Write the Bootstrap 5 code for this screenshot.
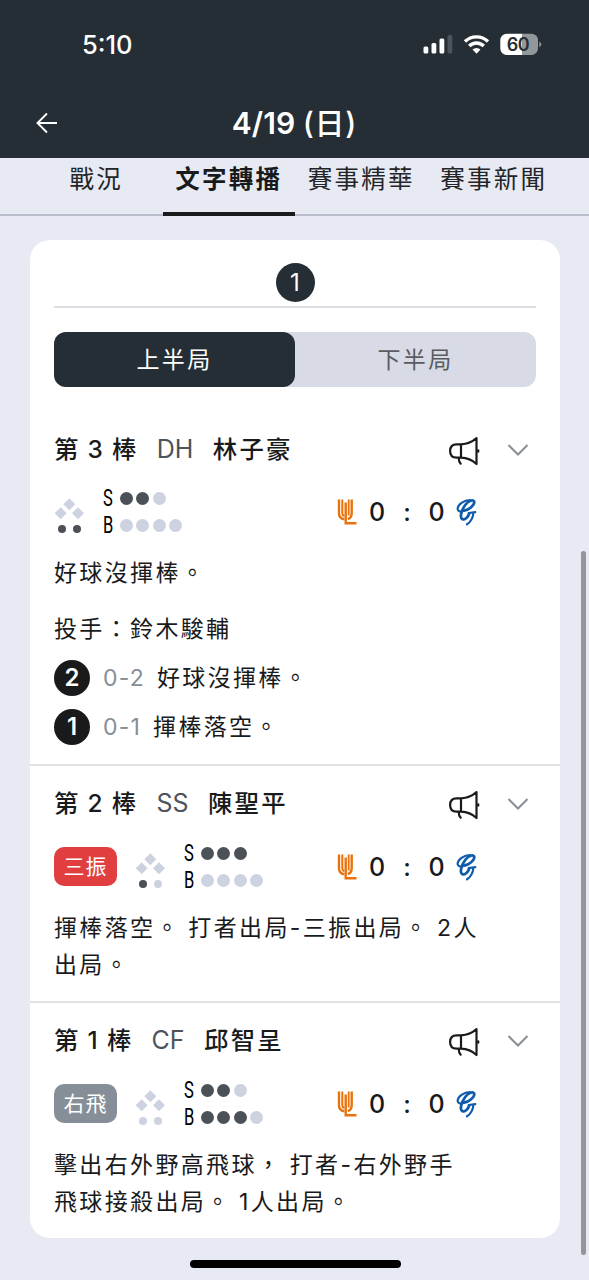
<!DOCTYPE html>
<html lang="zh-TW">
<head>
<meta charset="utf-8">
<meta name="viewport" content="width=device-width, initial-scale=1">
<title>文字轉播</title>
<link rel="stylesheet" href="https://cdn.jsdelivr.net/npm/bootstrap@5.3.0/dist/css/bootstrap.min.css">
<style>
  body { font-family: Inter, "Noto Sans CJK TC", sans-serif; background: #e7eaf2; color: #191a1c; width: 589px; height: 1280px; overflow: hidden; position: relative; }
  svg { display: block; flex: none; }
  .topbar { background: #242e34; color: #fff; height: 158px; }
  .statusbar { height: 88px; padding: 0 47px 0 82px; }
  .clock { font-size: 25.5px; font-weight: 500; line-height: 88px; padding-top: 1px; }
  .titlebar { height: 70px; padding: 0 36px; }
  .titlebar h1 { font-size: 30px; font-weight: 600; line-height: 70px; }
  .titlebar h1 span { font-weight: 500; letter-spacing: .8px; }
  .titlebar .end { width: 22px; }
  .tabs { height: 58px; padding: 0 29px 0 30px; border-bottom: 2px solid #b9bccd; }
  .tabs a { flex: 1 1 0; height: 58px; color: #242528; text-decoration: none; text-align: center; font-size: 24.5px; letter-spacing: 2.2px; line-height: 43px; white-space: nowrap; }
  .tabs a.on { font-weight: 700; color: #191a1c; border-bottom: 4px solid #191a1c; }
  .sheet { margin: 24px 29px 0 30px; height: 998px; background: #fff; border-radius: 20px; overflow: hidden; }
  .inning { margin: 0 24px; height: 68px; padding-top: 22.5px; border-bottom: 2px solid #dcdfe3; }
  .inning span { width: 39px; height: 39px; border-radius: 50%; background: #242e34; color: #fff; font-size: 24px; line-height: 39px; text-align: center; }
  .halves { margin: 24px 24px 0; height: 55px; background: #d8dae5; border-radius: 12px; font-size: 23px; letter-spacing: 2.3px; line-height: 57px; text-align: center; color: #585b62; }
  .halves .on { background: #242e34; color: #fff; border-radius: 12px; }
  .play { padding: 19px 24px 0; height: 237px; border-top: 2px solid #dfe1e5; }
  .play.first { border-top: 0; padding-top: 20px; height: 353px; margin-top: 24px; }
  .who { height: 36px; line-height: 36px; font-size: 24.4px; font-weight: 500; white-space: nowrap; }
  .who .cj { letter-spacing: 2.2px; word-spacing: -1.7px; }
  .who .pos { color: #4e5459; font-weight: 400; font-size: 25px; margin: 0 19.500px 0 18px; }
  .who .horn { margin-top: 3px; }
  .chev { margin: 2px 7px 0 26px; }
  .state { height: 54px; margin-top: 18.500px; }
  .first .state { margin-top: 18px; }
  .tag { width: 63px; height: 39px; border-radius: 10px; color: #fff; font-size: 21px; letter-spacing: 1px; line-height: 39px; text-align: center; margin-right: 18px; }
  .out { background: #e03e3f; } .fly { background: #868f97; }
  .cnt { margin-left: 18px; }
  .cnt > div { height: 27px; gap: 3.5px; }
  .cnt b { width: 13px; font: 400 23px/27px Roboto, sans-serif; transform: scaleX(.72); transform-origin: 0 50%; color: #000; }
  .cnt i { width: 13px; height: 13px; border-radius: 50%; background: #cdd2e0; }
  .cnt i.f { background: #4c5157; }
  .score { display: grid; grid-template-columns: 20px 40px 20px 39px 23px; margin-right: 57px; font-size: 25px; font-weight: 500; line-height: 54px; text-align: center; align-items: center; }
  .txt { font-size: 23px; letter-spacing: 2.35px; word-spacing: -1.2px; line-height: 37.5px; white-space: nowrap; margin-top: 16px; }
  .pitcher { margin-top: 18px; }
  .pitch { margin-top: 12px; height: 37px; }
  .num { width: 36px; height: 36px; border-radius: 50%; background: #191a1c; color: #fff; font-size: 24px; font-weight: 600; line-height: 36px; text-align: center; letter-spacing: 0; margin-top: -1px; }
  .bc { color: #868e96; letter-spacing: 1.2px; margin: 0 12px 0 13px; }
  .scrollbar-thumb { position: absolute; left: 581px; top: 551px; width: 5px; height: 704px; border-radius: 3px; background: #94969e; }
  .home { position: absolute; left: 190px; top: 1260px; width: 211px; height: 8px; border-radius: 4px; background: #000; }
</style>
</head>
<body>
<svg width="0" height="0" class="position-absolute">
  <symbol id="horn" viewBox="0 0 34 30"><g fill="none" stroke="#191a1c" stroke-width="2.2" stroke-linejoin="round" stroke-linecap="round"><path d="M14 8.300H9.500C5 8.300 3.100 11 3.100 15S5 21.700 9.500 21.700H14C19.500 21.900 25 23.800 29.500 28V2C25 6.200 19.500 8.100 14 8.300ZM14 8.300V21.700M11.700 21.700C11.700 24 12.200 26 13.700 27.700"/><path d="M31.200 14.300V15.700"/></g></symbol>
  <symbol id="chev" viewBox="0 0 22 14"><path d="M1.500 2L11 11.500L20.500 2" fill="none" stroke="#868e96" stroke-width="2"/></symbol>
  <symbol id="ul" viewBox="0 0 20 26"><g fill="none" stroke="#e8730c"><path stroke-width="2.400" d="M2 .5V14.500Q2 19.500 7.300 20.200"/><path stroke-width="2" d="M5.300 .5V14.500Q5.300 16.300 7.300 17"/><path stroke-width="2.400" d="M8.700 3.500V24.300H19.500"/><path stroke-width="1.800" d="M11.700 .5V16.500"/><path stroke-width="2.400" d="M14.700 .5V14Q14.700 18.900 10.800 20"/></g></symbol>
  <symbol id="gg" viewBox="0 0 22 28"><g fill="none" stroke="#0f5cab" stroke-linecap="round" stroke-linejoin="round"><path stroke-width="2.700" d="M8 12.700C13 12 18.600 7 18.300 3.800C17.500 1.200 12.500 2.500 9.200 7C5.500 12 3.200 19.500 6.500 21.200C9.500 22.300 12.300 18.500 13.200 15.500"/><path stroke-width="2.100" d="M14 2C8 2 1.600 6.500 1.600 10.800C1.700 13.800 5 14 8 12.700"/><path stroke-width="2.200" d="M12.800 15L19.300 14.200M17.500 14.500C17 19.500 15 23.800 11 26.300"/></g></symbol>
  <symbol id="bases" viewBox="0 0 31 54"><path fill="#cdd2e0" d="M15.300 13.300l6 6l-6 6l-6-6zM6.700 22.300l6 6l-6 6l-6-6zM24 22.300l6 6l-6 6l-6-6z"/></symbol>
</svg>

<header class="topbar">
  <div class="statusbar d-flex justify-content-between align-items-center">
    <div class="clock">5:10</div>
    <svg width="120" height="24" viewBox="422 32 120 24">
      <g fill="#fff"><rect x="423.500" y="46.500" width="4.800" height="7" rx="1.500"/><rect x="431.500" y="43" width="4.800" height="10.500" rx="1.500"/><rect x="439.500" y="38.500" width="4.800" height="15" rx="1.500"/><rect x="447.500" y="35" width="4.800" height="18.500" rx="1.500" fill="#4b545a"/></g>
      <g fill="none" stroke="#fff" stroke-width="3.400"><path d="M465 41.500A16.500 16.500 0 0 1 488 41.500"/><path d="M469.200 46A10.300 10.300 0 0 1 483.800 46"/></g>
      <path d="M472.500 49.600A5.800 5.800 0 0 1 480.500 49.600L476.500 53.800Z" fill="#fff"/>
      <path d="M507 33.700H522.500V55H507A6.500 6.500 0 0 1 500.300 48.500V40.200A6.500 6.500 0 0 1 507 33.700Z" fill="#fff"/>
      <path d="M522.500 33.700H531.500A6.500 6.500 0 0 1 538 40.200V48.500A6.500 6.500 0 0 1 531.500 55H522.500Z" fill="#92979a"/>
      <path d="M539.300 41.500Q541.300 42.500 541.300 44.300T539.300 47.200Z" fill="#92979a"/>
      <text x="518" y="50.800" text-anchor="middle" font-family="Inter" font-weight="600" font-size="18" letter-spacing="-.5" fill="#242e34">60</text>
    </svg>
  </div>
  <div class="titlebar d-flex align-items-center justify-content-between">
    <svg width="22" height="22" viewBox="0 0 22 22"><path d="M21 11H1.800M11 1.500L1.500 11L11 20.500" fill="none" stroke="#fff" stroke-width="1.900"/></svg>
    <h1 class="m-0">4/19 <span>(日)</span></h1>
    <span class="end"></span>
  </div>
</header>
<nav class="tabs d-flex"><a href="#">戰況</a><a href="#" class="on">文字轉播</a><a href="#">賽事精華</a><a href="#">賽事新聞</a></nav>

<main class="sheet">
  <div class="inning d-flex justify-content-center"><span>1</span></div>
  <div class="halves d-flex"><div class="on w-50">上半局</div><div class="w-50">下半局</div></div>

  <section class="play first">
    <div class="who d-flex align-items-center"><span class="cj">第 3 棒</span><span class="pos">DH</span><span class="cj">林子豪</span>
      <svg class="horn ms-auto" width="34" height="30"><use href="#horn"/></svg><svg class="chev" width="22" height="14"><use href="#chev"/></svg></div>
    <div class="state d-flex align-items-center">
      <svg width="31" height="54"><use href="#bases"/><g fill="#4c5157"><circle cx="8" cy="44" r="4"/><circle cx="23" cy="44" r="4"/></g></svg>
      <div class="cnt"><div class="d-flex align-items-center"><b>S</b><i class="f"></i><i class="f"></i><i></i></div><div class="d-flex align-items-center"><b>B</b><i></i><i></i><i></i><i></i></div></div>
      <div class="score ms-auto"><svg width="20" height="26"><use href="#ul"/></svg><span>0</span><span>:</span><span>0</span><svg width="22" height="28"><use href="#gg"/></svg></div>
    </div>
    <div class="txt">好球沒揮棒。</div>
    <div class="txt pitcher">投手：鈴木駿輔</div>
    <div class="txt pitch d-flex align-items-center"><span class="num">2</span><span class="bc">0-2</span>好球沒揮棒。</div>
    <div class="txt pitch d-flex align-items-center"><span class="num">1</span><span class="bc">0-1</span>揮棒落空。</div>
  </section>

  <section class="play">
    <div class="who d-flex align-items-center"><span class="cj">第 2 棒</span><span class="pos">SS</span><span class="cj">陳聖平</span>
      <svg class="horn ms-auto" width="34" height="30"><use href="#horn"/></svg><svg class="chev" width="22" height="14"><use href="#chev"/></svg></div>
    <div class="state d-flex align-items-center">
      <span class="tag out">三振</span>
      <svg width="31" height="54"><use href="#bases"/><circle cx="8" cy="44" r="4" fill="#4c5157"/><circle cx="23" cy="44" r="4" fill="#cdd2e0"/></svg>
      <div class="cnt"><div class="d-flex align-items-center"><b>S</b><i class="f"></i><i class="f"></i><i class="f"></i></div><div class="d-flex align-items-center"><b>B</b><i></i><i></i><i></i><i></i></div></div>
      <div class="score ms-auto"><svg width="20" height="26"><use href="#ul"/></svg><span>0</span><span>:</span><span>0</span><svg width="22" height="28"><use href="#gg"/></svg></div>
    </div>
    <div class="txt">揮棒落空。 打者出局-三振出局。 2人<br>出局。</div>
  </section>

  <section class="play">
    <div class="who d-flex align-items-center"><span class="cj">第 1 棒</span><span class="pos">CF</span><span class="cj">邱智呈</span>
      <svg class="horn ms-auto" width="34" height="30"><use href="#horn"/></svg><svg class="chev" width="22" height="14"><use href="#chev"/></svg></div>
    <div class="state d-flex align-items-center">
      <span class="tag fly">右飛</span>
      <svg width="31" height="54"><use href="#bases"/><g fill="#cdd2e0"><circle cx="8" cy="44" r="4"/><circle cx="23" cy="44" r="4"/></g></svg>
      <div class="cnt"><div class="d-flex align-items-center"><b>S</b><i class="f"></i><i class="f"></i><i></i></div><div class="d-flex align-items-center"><b>B</b><i class="f"></i><i class="f"></i><i class="f"></i><i></i></div></div>
      <div class="score ms-auto"><svg width="20" height="26"><use href="#ul"/></svg><span>0</span><span>:</span><span>0</span><svg width="22" height="28"><use href="#gg"/></svg></div>
    </div>
    <div class="txt">擊出右外野高飛球， 打者-右外野手<br>飛球接殺出局。 1人出局。</div>
  </section>
</main>
<div class="scrollbar-thumb"></div>
<div class="home"></div>
<script src="https://cdn.jsdelivr.net/npm/bootstrap@5.3.0/dist/js/bootstrap.bundle.min.js"></script>
</body>
</html>
